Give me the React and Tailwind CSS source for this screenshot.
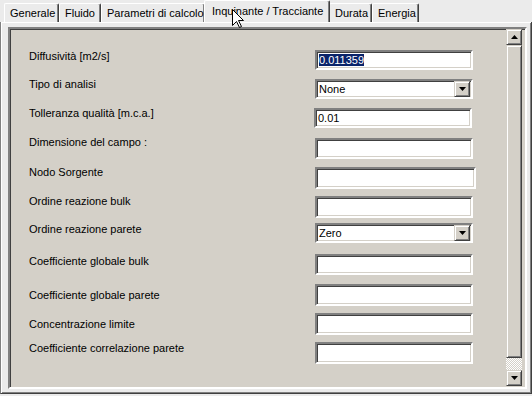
const font = { fontFamily: '"Liberation Sans", Arial, sans-serif' };

const tabs = [
  { label: "Generale", w: "w-[55px]" },
  { label: "Fluido", w: "w-[42px]" },
  { label: "Parametri di calcolo", w: "w-[104px]" },
  { label: "Inquinante / Tracciante", w: "w-[126px]", active: true },
  { label: "Durata", w: "w-[43px]" },
  { label: "Energia", w: "w-[47px]" },
];

const rows = [
  { label: "Diffusività [m2/s]", mt: "mt-[21px]", h: "h-[20px]", lt: "mt-0", value: "0.011359", selected: true },
  { label: "Tipo di analisi", mt: "mt-[9px]", h: "h-[20px]", lt: "-mt-[1px]", value: "None", select: true },
  { label: "Tolleranza qualità [m.c.a.]", mt: "mt-[9px]", h: "h-[20px]", lt: "-mt-[1px]", value: "0.01", shift: true },
  { label: "Dimensione del campo :", mt: "mt-[10px]", h: "h-[21px]", lt: "-mt-[2px]" },
  { label: "Nodo Sorgente", mt: "mt-[8px]", h: "h-[22px]", lt: "-mt-[1px]", wide: true },
  { label: "Ordine reazione bulk", mt: "mt-[7px]", h: "h-[22px]", lt: "-mt-[1px]" },
  { label: "Ordine reazione parete", mt: "mt-[5px]", h: "h-[20px]", lt: "mt-0", value: "Zero", select: true },
  { label: "Coefficiente globale bulk", mt: "mt-[11px]", h: "h-[21px]", lt: "mt-[1px]" },
  { label: "Coefficiente globale parete", mt: "mt-[9px]", h: "h-[22px]", lt: "mt-[5px]" },
  { label: "Concentrazione limite", mt: "mt-[7px]", h: "h-[22px]", lt: "mt-[5px]" },
  { label: "Coefficiente correlazione parete", mt: "mt-[7px]", h: "h-[22px]", lt: "mt-0" },
];

function Tri({ up }) {
  return (
    <svg width="7" height="4" viewBox="0 0 7 4">
      {up ? <path d="M3.5 0 L7 4 L0 4 Z" fill="#000" /> : <path d="M0 0 L7 0 L3.5 4 Z" fill="#000" />}
    </svg>
  );
}

function RaisedBtn({ up, className = "" }) {
  return (
    <div className={`w-[16px] h-[16px] shrink-0 bg-[#d4d0c8] border border-t-[#d4d0c8] border-l-[#d4d0c8] border-r-[#404040] border-b-[#404040] shadow-[inset_1px_1px_0_#fff,inset_-1px_-1px_0_#808080] flex items-center justify-center ${className}`}>
      <Tri up={up} />
    </div>
  );
}

function Field({ row }) {
  const width = row.wide ? "w-[161px]" : "w-[158px]";
  return (
    <div className={`${width} ${row.h} ${row.shift ? "-ml-[1px]" : ""} shrink-0 bg-white border-2 border-t-[#808080] border-l-[#808080] border-r-white border-b-white shadow-[inset_1px_1px_0_#404040,inset_-1px_-1px_0_#d4d0c8] flex items-center`}>
      {row.value && (
        <span className="flex-1 pl-[2px] text-[11px] leading-[13px] text-black">
          {row.selected ? <span className="bg-[#0a246a] text-white">{row.value}</span> : row.value}
        </span>
      )}
      {row.select && <RaisedBtn className="mr-[1px]" />}
    </div>
  );
}

export default function App() {
  return (
    <div style={font} className="w-[532px] h-[396px] bg-[#ebebeb] overflow-hidden relative text-black">
      <div className="h-[22px] flex items-end pl-[4px]">
        {tabs.map((t) =>
          t.active ? (
            <div key={t.label} className={`${t.w} h-[22px] -mx-[1px] relative z-10 bg-[#ebebeb] border-l border-t border-r border-l-white border-t-white border-r-[#404040] rounded-t-[2px] shadow-[inset_-1px_0_0_#808080] text-[11px] leading-[13px] pl-[7px] pt-[4px] whitespace-nowrap`}>
              {t.label}
            </div>
          ) : (
            <div key={t.label} className={`${t.w} h-[19px] bg-[#ebebeb] border-l border-t border-r border-l-white border-t-white border-r-[#404040] rounded-t-[2px] shadow-[inset_-1px_0_0_#808080] text-[11px] leading-[13px] pl-[5px] pt-[3px] whitespace-nowrap`}>
              {t.label}
            </div>
          )
        )}
      </div>

      <div className="w-[532px] h-[372px] border-l border-r border-b border-l-[#808080] border-r-[#404040] border-b-[#404040] shadow-[inset_1px_1px_0_#fff,inset_-1px_-1px_0_#808080] pl-[7px] pt-[5px] pr-[3px]">
        <div className="w-[519px] h-[362px] bg-[#d4d0c8] border-2 border-t-[#808080] border-l-[#808080] border-r-white border-b-white shadow-[inset_1px_1px_0_#404040,inset_-1px_-1px_0_#d4d0c8] flex">
          <div className="flex-1 flex flex-col pl-[19px]">
            {rows.map((r) => (
              <div key={r.label} className={`flex items-start ${r.mt} ${r.h}`}>
                <div className={`w-[286px] shrink-0 text-[11px] leading-[13px] whitespace-nowrap ${r.lt}`}>{r.label}</div>
                <Field row={r} />
              </div>
            ))}
          </div>
          <div className="w-[16px] mr-[3px] flex flex-col pb-[1px]">
            <RaisedBtn up />
            <div className="h-[313px] bg-[#d4d0c8] border border-t-[#d4d0c8] border-l-[#d4d0c8] border-r-[#404040] border-b-[#404040] shadow-[inset_1px_1px_0_#fff,inset_-1px_-1px_0_#808080]" />
            <div className="flex-1 bg-[repeating-conic-gradient(#d4d0c8_0%_25%,#ffffff_0%_50%)] bg-[length:2px_2px]" />
            <RaisedBtn />
          </div>
        </div>
      </div>

      <svg className="absolute left-[232px] top-[9px] z-20" width="13" height="20" viewBox="0 0 13 20">
        <path d="M0.5 0.5 L0.5 16.5 L4.5 12.5 L7.5 18.5 L9.5 17.5 L6.5 11.5 L11.5 11.5 Z" fill="#fff" stroke="#000" strokeWidth="1" />
      </svg>
    </div>
  );
}
